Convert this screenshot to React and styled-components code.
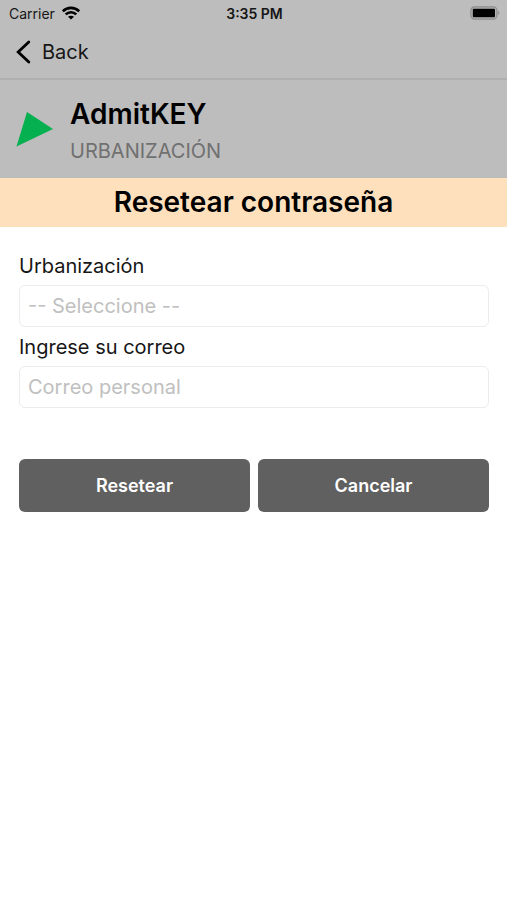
import React, { useState } from "react";
import styled, { createGlobalStyle } from "styled-components";

const GlobalStyle = createGlobalStyle`
  * {
    box-sizing: border-box;
  }

  body {
    margin: 0;
    background-color: #ffffff;
    color: #000000;
    font-family: Inter, "Liberation Sans", sans-serif;
  }
`;

const Header = styled.header`
  background-color: #bdbdbd;
`;

const StatusBar = styled.div`
  display: grid;
  grid-template-columns: 1fr auto 1fr;
  align-items: center;
  height: 26px;
  padding: 0 7px 0 9px;
  font-size: 14px;
  color: #161616;
`;

const Carrier = styled.span`
  display: flex;
  align-items: center;
  gap: 7px;
`;

const Clock = styled.time`
  font-weight: 600;
`;

const BatteryIcon = styled.svg`
  justify-self: end;
`;

const NavBar = styled.nav`
  display: flex;
  align-items: center;
  height: 54px;
  padding: 0 16px;
  border-bottom: 2px solid #b0b0b0;
`;

const BackLink = styled.a`
  display: flex;
  align-items: center;
  gap: 10px;
  font-size: 20px;
  line-height: 24px;
  color: #161616;
  text-decoration: none;
`;

const Brand = styled.div`
  display: flex;
  align-items: center;
  gap: 16px;
  padding: 16px 16px 14px;
`;

const BrandName = styled.h1`
  margin: 0;
  font-size: 28px;
  font-weight: 600;
  line-height: 36px;
`;

const BrandPlace = styled.p`
  margin: 6px 0 0;
  font-size: 20px;
  line-height: 26px;
  color: #707070;
`;

const Title = styled.h2`
  margin: 0;
  padding: 6px 16px 7px;
  background-color: #ffe0bd;
  font-size: 28px;
  font-weight: 600;
  line-height: 36px;
  text-align: center;
`;

const Form = styled.form`
  display: flex;
  flex-direction: column;
  gap: 8px;
  padding: 27px 18px 27px 19px;
`;

const Field = styled.div`
  display: flex;
  flex-direction: column;
  gap: 7px;
`;

const Label = styled.label`
  font-size: 20px;
  line-height: 24px;
  color: #161616;
`;

const Input = styled.input`
  width: 100%;
  height: 42px;
  padding: 0 8px;
  border: 1px solid #ececec;
  border-radius: 6px;
  background-color: #ffffff;
  font-family: inherit;
  font-size: 20px;
  color: ${(props) => (props.$empty ? "#c0c0c0" : "#161616")};
  appearance: none;

  &::placeholder {
    color: #c0c0c0;
    opacity: 1;
  }
`;

const Actions = styled.div`
  display: flex;
  gap: 8px;
  margin-top: 43px;
`;

const Button = styled.button`
  flex: 1;
  height: 53px;
  border: none;
  border-radius: 6px;
  background-color: #606060;
  color: #ffffff;
  font-family: inherit;
  font-size: 18px;
  font-weight: 600;
  cursor: pointer;
`;

export default function App() {
  const [place, setPlace] = useState("");
  const [email, setEmail] = useState("");

  const clearForm = () => {
    setPlace("");
    setEmail("");
  };

  return (
    <>
      <GlobalStyle />
      <Header>
        <StatusBar>
          <Carrier>
            Carrier
            <svg width="18" height="14" viewBox="0 0 18 14" fill="none" stroke="#000000" strokeWidth="2.6">
              <path d="M0.8 5.2C5.4 0.7 12.6 0.7 17.2 5.2" />
              <path d="M3.7 8.4C6.7 5.5 11.3 5.5 14.3 8.4" />
              <path d="M9 13.6L6 10.8C7.7 9.3 10.3 9.3 12 10.8Z" fill="#000000" stroke="none" />
            </svg>
          </Carrier>
          <Clock>3:35 PM</Clock>
          <BatteryIcon width="30" height="14" viewBox="0 0 30 14">
            <rect x="0.9" y="0.9" width="26" height="12.2" rx="3.6" fill="#b4b4b4" stroke="#8c8c8c" strokeWidth="1.2" />
            <rect x="2.8" y="2.8" width="22.2" height="8.4" rx="1" fill="#000000" />
            <path d="M28.2 4.8Q30.6 7 28.2 9.2Z" fill="#8c8c8c" />
          </BatteryIcon>
        </StatusBar>
        <NavBar>
          <BackLink href="#">
            <svg width="16" height="24" viewBox="0 0 16 24" fill="none" stroke="#000000" strokeWidth="2.8" strokeLinecap="round">
              <path d="M12.8 2L2.2 12L12.8 22" />
            </svg>
            Back
          </BackLink>
        </NavBar>
        <Brand>
          <svg width="38" height="36" viewBox="0 0 38 36">
            <path d="M11 0L37 17L0.5 34.5Z" fill="#05b050" />
          </svg>
          <div>
            <BrandName>AdmitKEY</BrandName>
            <BrandPlace>URBANIZACIÓN</BrandPlace>
          </div>
        </Brand>
      </Header>
      <main>
        <Title>Resetear contraseña</Title>
        <Form onSubmit={(e) => e.preventDefault()}>
          <Field>
            <Label htmlFor="place">Urbanización</Label>
            <Input
              as="select"
              id="place"
              value={place}
              $empty={!place}
              onChange={(e) => setPlace(e.target.value)}
            >
              <option value="">-- Seleccione --</option>
            </Input>
          </Field>
          <Field>
            <Label htmlFor="email">Ingrese su correo</Label>
            <Input
              id="email"
              type="email"
              placeholder="Correo personal"
              value={email}
              onChange={(e) => setEmail(e.target.value)}
            />
          </Field>
          <Actions>
            <Button type="submit">Resetear</Button>
            <Button type="button" onClick={clearForm}>
              Cancelar
            </Button>
          </Actions>
        </Form>
      </main>
    </>
  );
}
